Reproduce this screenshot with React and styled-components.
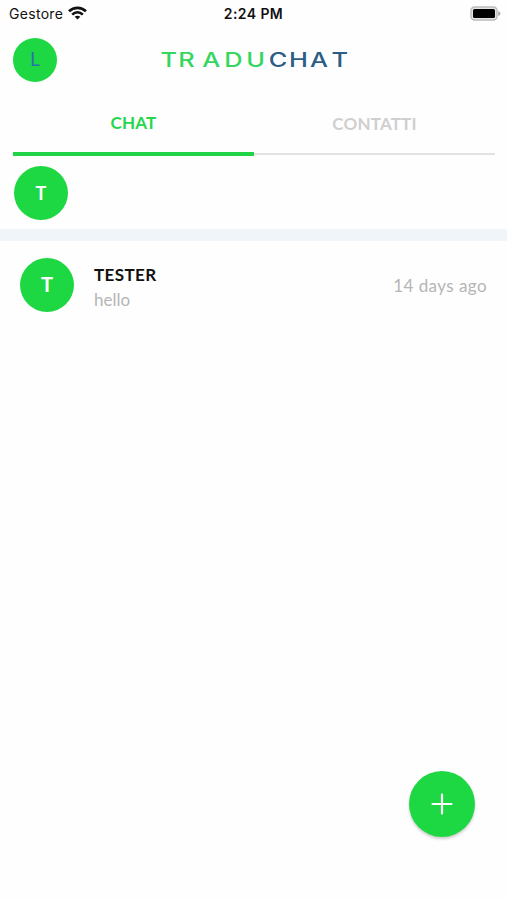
// Dependencies
import React from 'react'
import styled, { createGlobalStyle } from 'styled-components'

const GREEN = '#1ed843'

const GlobalStyle = createGlobalStyle`
  body {
    margin: 0;
    background: #fefefe;
    font-family: Lato, "Liberation Sans", sans-serif;
  }

  * {
    box-sizing: border-box;
  }
`

const Screen = styled.div`
  position: relative;
  width: 100%;
  height: 900px;
  overflow: hidden;
  background: #fefefe;
`

const StatusBar = styled.div`
  display: grid;
  grid-template-columns: 1fr auto 1fr;
  align-items: center;
  height: 28px;
  padding: 0 6px 0 9px;
  color: #111;
  font: 400 14px/28px Inter, sans-serif;
`

const Carrier = styled.div`
  display: flex;
  align-items: center;
  gap: 5px;
  letter-spacing: 0.3px;

  svg {
    margin-top: -2px;
  }
`

const Clock = styled.div`
  margin-right: 3px;
  font-weight: 600;
  letter-spacing: 0.4px;
`

const Battery = styled.svg`
  display: block;
  margin: -2px 0 0 auto;
`

const Header = styled.header`
  display: grid;
  grid-template-columns: 44px 1fr 44px;
  align-items: center;
  height: 64px;
  padding: 0 13px;
`

const Logo = styled.svg`
  display: block;
  justify-self: center;
  overflow: visible;
  font: 500 19.5px Inter, sans-serif;
`

const Avatar = styled.div`
  display: flex;
  flex: none;
  align-items: center;
  justify-content: center;
  width: ${props => props.$size}px;
  height: ${props => props.$size}px;
  padding-bottom: ${props => props.$lift || 0}px;
  border-radius: 50%;
  background: ${GREEN};
  color: ${props => props.$color || '#fff'};
  font-size: ${props => props.$font || 19}px;
  font-weight: ${props => props.$weight || 700};
`

const Tabs = styled.nav`
  display: flex;
  height: 64px;
  padding: 0 12px 0 13px;
`

const Tab = styled.div`
  display: flex;
  flex: 1;
  flex-direction: column;
  justify-content: space-between;
  padding-top: ${props => props.$active ? 20 : 21}px;
  color: ${props => props.$active ? '#25d64d' : '#cfcfcf'};
  font-size: 17px;
  font-weight: 700;
  line-height: 22px;
  letter-spacing: 0.2px;
  text-align: center;

  &::after {
    content: '';
    height: ${props => props.$active ? 4 : 2}px;
    margin-bottom: ${props => props.$active ? 0 : 1}px;
    background: ${props => props.$active ? '#22d247' : '#e2e2e2'};
  }
`

const Recents = styled.div`
  height: 85px;
  padding: 10px 14px;
  border-bottom: 12px solid #f0f5fa;
`

const ChatRow = styled.div`
  display: flex;
  align-items: center;
  height: 88px;
  padding: 0 20px;
`

const Message = styled.div`
  flex: 1;
  margin-left: 20px;
  padding-top: 3px;
  line-height: 25px;
`

const Name = styled.div`
  color: #111;
  font-size: 17px;
  font-weight: 700;
  letter-spacing: 0.4px;
`

const Preview = styled.div`
  color: #b5b5b5;
  font-size: 17px;
`

const Time = styled.div`
  color: #b5b5b5;
  font-size: 17px;
  letter-spacing: 0.43px;
`

const AddButton = styled.button`
  position: absolute;
  right: 32px;
  bottom: 63px;
  display: flex;
  align-items: center;
  justify-content: center;
  width: 66px;
  height: 66px;
  padding: 0;
  border: 0;
  border-radius: 50%;
  background: ${GREEN};
  box-shadow: 0 2px 3px rgba(0, 0, 0, 0.2);
`

const WifiIcon = () => (
  <svg width="19" height="14" viewBox="0 0 19 14" fill="none" stroke="#111" strokeWidth="2.7">
    <path d="M1 5.3C5.8 .6 13.2 .6 18 5.3" />
    <path d="M4.2 8.6C7.3 5.6 11.7 5.6 14.8 8.6" />
    <path d="M9.5 13.6L6.7 10.8C8.3 9.4 10.7 9.4 12.3 10.8Z" fill="#111" stroke="none" />
  </svg>
)

const BatteryIcon = () => (
  <Battery width="31" height="15" viewBox="0 0 31 15">
    <rect x="1" y="1" width="26" height="13" rx="3.5" fill="#e4e4e4" stroke="#bcbcbc" strokeWidth="1.4" />
    <rect x="3" y="3" width="22" height="9" rx="1.5" fill="#000" />
    <path d="M28.2 5V10Q30.5 9 30.5 7.5T28.2 5Z" fill="#aaa" />
  </Battery>
)

const Wordmark = () => (
  <Logo width="188" height="24" viewBox="0 0 188 24">
    <g transform="scale(1.3 1)">
      <text x="0.4 14 32.5 49.5 66.4" y="19" fill="#35d65f">TRADU</text>
      <text x="83.7 99.2 115.4 132" y="19" fill="#2b5d85">CHAT</text>
    </g>
  </Logo>
)

export default function App() {
  return (
    <Screen>
      <GlobalStyle />
      <StatusBar>
        <Carrier>Gestore <WifiIcon /></Carrier>
        <Clock>2:24 PM</Clock>
        <BatteryIcon />
      </StatusBar>
      <Header>
        <Avatar $size={44} $color="#2a70b0" $weight={400} $lift={3}>L</Avatar>
        <Wordmark />
      </Header>
      <Tabs>
        <Tab $active>CHAT</Tab>
        <Tab>CONTATTI</Tab>
      </Tabs>
      <Recents>
        <Avatar $size={54} $font={18} $lift={1}>T</Avatar>
      </Recents>
      <ChatRow>
        <Avatar $size={54} $font={20} $lift={2}>T</Avatar>
        <Message>
          <Name>TESTER</Name>
          <Preview>hello</Preview>
        </Message>
        <Time>14 days ago</Time>
      </ChatRow>
      <AddButton aria-label="+">
        <svg width="22" height="22" viewBox="0 0 22 22" stroke="#fff" strokeWidth="2.2" strokeLinecap="round">
          <path d="M11 1.5V20.5M1.5 11H20.5" />
        </svg>
      </AddButton>
    </Screen>
  )
}
